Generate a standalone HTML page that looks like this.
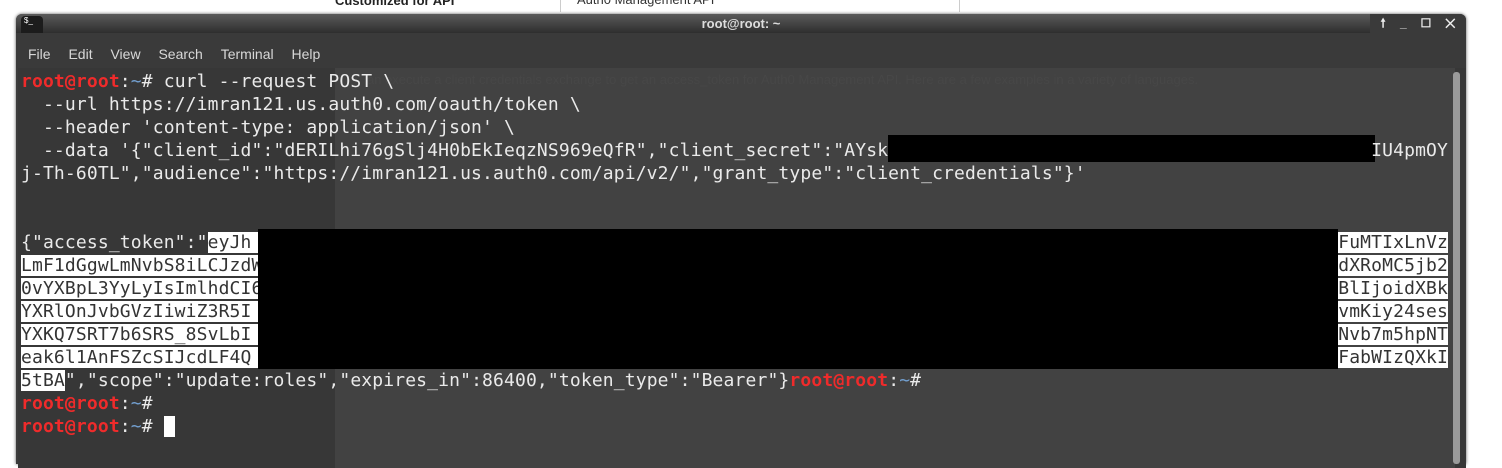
<!DOCTYPE html><html><head><meta charset="utf-8"><style>
body{margin:0;width:1502px;height:453px;background:#fff;position:relative;overflow:hidden;font-family:"Liberation Sans",sans-serif}
.win{position:absolute;left:16px;top:14px;width:1450px;height:450px;background:#3b3b3b;border-radius:6px 6px 0 0;box-shadow:0 0 3px #555}
.tb{position:absolute;left:0;top:0;width:100%;height:19px;background:linear-gradient(#5a5a5a,#2e2e2e);border-radius:6px 6px 0 0;color:#ddd;font-size:13px;font-weight:bold;text-align:center;line-height:20px}
.menu{position:absolute;left:0;top:19px;width:100%;height:35px;background:#3a3a3a;color:#d8d8d8;font-size:14px;line-height:43px}
.menu span{margin-left:12px;margin-right:2px}
.term{position:absolute;left:2px;top:54px;width:1448px;height:400px;background:#373737}
.ghost{position:absolute;left:319px;top:54px;width:1120px;height:400px;background:#424242}
pre{position:absolute;left:21px;top:70px;margin:0;font-family:"DejaVu Sans Mono","Liberation Mono",monospace;font-size:18px;letter-spacing:0.14px;line-height:23px;color:#eaeaea;white-space:pre}
.r{color:#ef2b2b;font-weight:bold}.b{color:#729fcf}
.sel{background:#fff;color:#333}
.blk{position:absolute;background:#000}
</style></head><body>
<div style="position:absolute;left:335px;top:-7px;font-size:13px;color:#222;font-weight:bold">Customized for API</div>
<div style="position:absolute;left:560px;top:-8px;width:398px;height:20px;border-left:1px solid #ccc;border-right:1px solid #ccc"><span style="position:absolute;left:16px;top:0;font-size:13px;color:#333">Auth0 Management API</span><span style="position:absolute;right:14px;top:-2px;font-size:10px">▼</span></div>
<div class="win">
<div class="tb">root@root: ~</div>
<div style="position:absolute;left:5px;top:2px;width:22px;height:21px;background:#1c1c1c;border-radius:4px;color:#fff;font-size:8px;line-height:10px;padding-left:3px;box-sizing:border-box">$_</div>
<div style="position:absolute;right:0;top:0;width:96px;height:26px;background:#3a3a3a;border-radius:0 6px 0 8px;color:#eee;font-size:12px;font-weight:bold;line-height:19px;word-spacing:11px;text-align:center">🠕 _ ☐ ✕</div>
<div class="menu"><span>File</span> <span>Edit</span> <span>View</span> <span>Search</span> <span>Terminal</span> <span>Help</span></div>
<div class="term"></div><div class="ghost"></div>
<div style="position:absolute;left:1437px;top:58px;width:7px;height:392px;background:#9a9a9a;border-radius:3px"></div>
</div>
<div style="position:absolute;left:367px;top:72px;font-size:13px;color:#474747">an execute a client credentials exchange to get an   access_token   for Auth0 Management API. Here are a few examples in a variety of languages.</div>
<div class="blk" style="left:888px;top:135px;width:487px;height:27px"></div>
<pre><span class="r">root@root</span>:<span class="b">~</span># curl --request POST \
  --url https://imran121.us.auth0.com/oauth/token \
  --header 'content-type: application/json' \
  --data '{"client_id":"dERILhi76gSlj4H0bEkIeqzNS969eQfR","client_secret":"AYsk                                            IU4pmOY
j-Th-60TL","audience":"https://imran121.us.auth0.com/api/v2/","grant_type":"client_credentials"}'


{"access_token":"<span class="sel">eyJh                                                                                                   FuMTIxLnVz</span>
<span class="sel">LmF1dGgwLmNvbS8iLCJzdW                                                                                                  dXRoMC5jb2</span>
<span class="sel">0vYXBpL3YyLyIsImlhdCI6                                                                                                  BlIjoidXBk</span>
<span class="sel">YXRlOnJvbGVzIiwiZ3R5I                                                                                                   vmKiy24ses</span>
<span class="sel">YXKQ7SRT7b6SRS_8SvLbI                                                                                                   Nvb7m5hpNT</span>
<span class="sel">eak6l1AnFSZcSIJcdLF4Q                                                                                                   FabWIzQXkI</span>
<span class="sel">5tBA</span>","scope":"update:roles","expires_in":86400,"token_type":"Bearer"}<span class="r">root@root</span>:<span class="b">~</span>#
<span class="r">root@root</span>:<span class="b">~</span>#
<span class="r">root@root</span>:<span class="b">~</span># <span style="background:#fff"> </span></pre>
<div class="blk" style="left:258px;top:229px;width:1080px;height:140px"></div>
</body></html>
